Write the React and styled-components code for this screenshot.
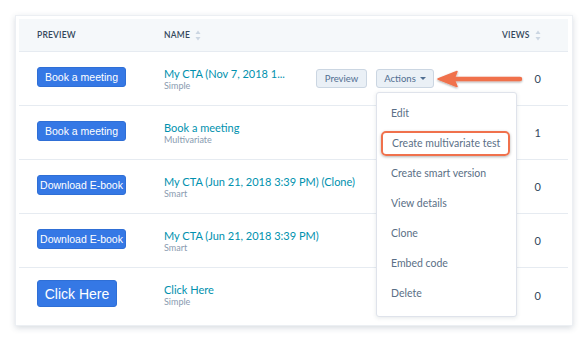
import React from "react";
import styled, { createGlobalStyle } from "styled-components";

const Global = createGlobalStyle`
	body {
		margin: 0;
		background: #ffffff;
		font-family: Lato, "Open Sans", sans-serif;
	}
`;

const Page = styled.div`
	width: 588px;
	height: 341px;
	padding: 15px 15px 0 15px;
	box-sizing: border-box;
`;

const Card = styled.div`
	width: 558px;
	height: 311px;
	box-sizing: border-box;
	padding: 3px 4px 4px 3px;
	background: #ffffff;
	border: 1px solid #eceff3;
	box-shadow: 0 2px 6px rgba(40, 60, 90, 0.18);
`;

const Row = styled.div`
	display: grid;
	grid-template-columns: 145px 1fr 74px;
	align-items: center;
	height: ${(p) => (p.$head ? "33px" : "54px")};
	background: ${(p) => (p.$head ? "#f5f8fa" : "#ffffff")};
	border-bottom: ${(p) => (p.$last ? "none" : "1px solid #e6ebf1")};
	box-sizing: border-box;
	position: relative;
`;

const HeadCell = styled.div`
	display: flex;
	align-items: center;
	gap: 5px;
	padding-left: ${(p) => p.$pad || "18px"};
	font-size: 8.5px;
	font-weight: 600;
	letter-spacing: 0.2px;
	color: #33475b;
	text-transform: uppercase;
`;

const Sort = () => (
	<svg width="6" height="11" viewBox="0 0 6 11">
		<path d="M3 0.5 L5.5 4 H0.5 Z" fill="#cbd6e2" />
		<path d="M3 10.5 L5.5 7 H0.5 Z" fill="#cbd6e2" />
	</svg>
);

const PreviewCell = styled.div`
	padding-left: 18px;
	padding-bottom: 3px;
	display: flex;
	align-items: center;
`;

const CtaButton = styled.div`
	display: flex;
	align-items: center;
	justify-content: center;
	width: ${(p) => (p.$big ? "80px" : "89px")};
	height: ${(p) => (p.$big ? "27px" : "20px")};
	background: #3578e5;
	border: 1px solid #2f6fd6;
	box-sizing: border-box;
	border-radius: 3px;
	color: #ffffff;
	font-family: "Liberation Sans", Arial, sans-serif;
	font-size: ${(p) => (p.$big ? "14px" : "10.5px")};
	white-space: nowrap;
`;

const NameCell = styled.div`
	display: flex;
	align-items: center;
`;

const NameBlock = styled.div`
	display: flex;
	flex-direction: column;
	width: ${(p) => p.$w || "auto"};
`;

const Title = styled.div`
	color: #0091ae;
	font-size: 11px;
	font-weight: 400;
	line-height: 13px;
	white-space: nowrap;
`;

const Sub = styled.div`
	color: #8a9bb0;
	font-size: 9px;
	line-height: 11px;
`;

const SmallButton = styled.div`
	display: flex;
	align-items: center;
	justify-content: center;
	gap: 4px;
	width: ${(p) => p.$w};
	height: 19px;
	box-sizing: border-box;
	margin-left: ${(p) => p.$ml || "0"};
	background: #eaf0f6;
	border: 1px solid #cbd6e2;
	border-radius: 3px;
	color: #506e91;
	font-size: 9.5px;
	font-weight: 400;
	position: relative;
`;

const Caret = styled.span`
	width: 0;
	height: 0;
	border-left: 3px solid transparent;
	border-right: 3px solid transparent;
	border-top: 3px solid #506e91;
`;

const Menu = styled.div`
	position: absolute;
	top: 22px;
	left: -1px;
	width: 141px;
	box-sizing: border-box;
	padding: 5px 0 8px 0;
	background: #ffffff;
	border: 1px solid #dfe3eb;
	border-radius: 3px;
	box-shadow: 0 1px 4px rgba(45, 62, 80, 0.12);
	z-index: 5;
`;

const MenuItem = styled.div`
	display: flex;
	align-items: center;
	box-sizing: border-box;
	height: ${(p) => (p.$hl ? "25px" : "30px")};
	margin: ${(p) => (p.$hl ? "2.5px 6px 2.5px 4px" : "0")};
	padding-left: ${(p) => (p.$hl ? "9px" : "14px")};
	border: ${(p) => (p.$hl ? "2px solid #f0714c" : "none")};
	border-radius: ${(p) => (p.$hl ? "5px" : "0")};
	box-shadow: ${(p) => (p.$hl ? "0 1px 3px rgba(0,0,0,0.3)" : "none")};
	color: #5a6f86;
	font-size: 10.5px;
	font-weight: 400;
	white-space: nowrap;
`;

const Arrow = styled.svg`
	position: absolute;
	left: 60px;
	top: 0px;
	overflow: visible;
`;

const Views = styled.div`
	text-align: right;
	padding-right: 27px;
	color: #33475b;
	font-size: 11px;
`;

const rows = [
	{ cta: "Book a meeting", name: "Book a meeting", sub: "Multivariate", views: "1" },
	{ cta: "Download E-book", name: "My CTA (Jun 21, 2018 3:39 PM) (Clone)", sub: "Smart", views: "0" },
	{ cta: "Download E-book", name: "My CTA (Jun 21, 2018 3:39 PM)", sub: "Smart", views: "0" },
	{ cta: "Click Here", name: "Click Here", sub: "Simple", views: "0", big: true },
];

const menuItems = [
	"Edit",
	"Create multivariate test",
	"Create smart version",
	"View details",
	"Clone",
	"Embed code",
	"Delete",
];

const App = () => {
	return (
		<Page>
			<Global />
			<Card>
				<Row $head>
					<HeadCell>Preview</HeadCell>
					<HeadCell $pad="0">
						Name <Sort />
					</HeadCell>
					<HeadCell $pad="8px">
						Views <Sort />
					</HeadCell>
				</Row>
				<Row>
					<PreviewCell>
						<CtaButton>Book a meeting</CtaButton>
					</PreviewCell>
					<NameCell>
						<NameBlock $w="152px">
							<Title>My CTA (Nov 7, 2018 1...</Title>
							<Sub>Simple</Sub>
						</NameBlock>
						<SmallButton $w="51px">Preview</SmallButton>
						<SmallButton $w="58px" $ml="9px">
							Actions <Caret />
							<Menu>
								{menuItems.map((m) => (
									<MenuItem key={m} $hl={m === "Create multivariate test"}>
										{m}
									</MenuItem>
								))}
							</Menu>
							<Arrow width="86" height="20" viewBox="0 0 86 20">
								<defs>
									<filter id="sh" x="-10%" y="-30%" width="120%" height="170%">
										<feDropShadow dx="0" dy="1" stdDeviation="0.8" floodColor="#000" floodOpacity="0.35" />
									</filter>
								</defs>
								<g filter="url(#sh)">
									<line x1="16" y1="9" x2="83" y2="9" stroke="#f0714c" strokeWidth="4.5" strokeLinecap="round" />
									<path d="M1 9 L20 1.5 L17 9 L20 16.5 Z" fill="#f0714c" stroke="#f0714c" strokeWidth="1.5" strokeLinejoin="round" />
								</g>
							</Arrow>
						</SmallButton>
					</NameCell>
					<Views>0</Views>
				</Row>
				{rows.map((r, i) => (
					<Row key={i} $last={i === rows.length - 1}>
						<PreviewCell>
							<CtaButton $big={r.big}>{r.cta}</CtaButton>
						</PreviewCell>
						<NameCell>
							<NameBlock>
								<Title>{r.name}</Title>
								<Sub>{r.sub}</Sub>
							</NameBlock>
						</NameCell>
						<Views>{r.views}</Views>
					</Row>
				))}
			</Card>
		</Page>
	);
};

export default App;
